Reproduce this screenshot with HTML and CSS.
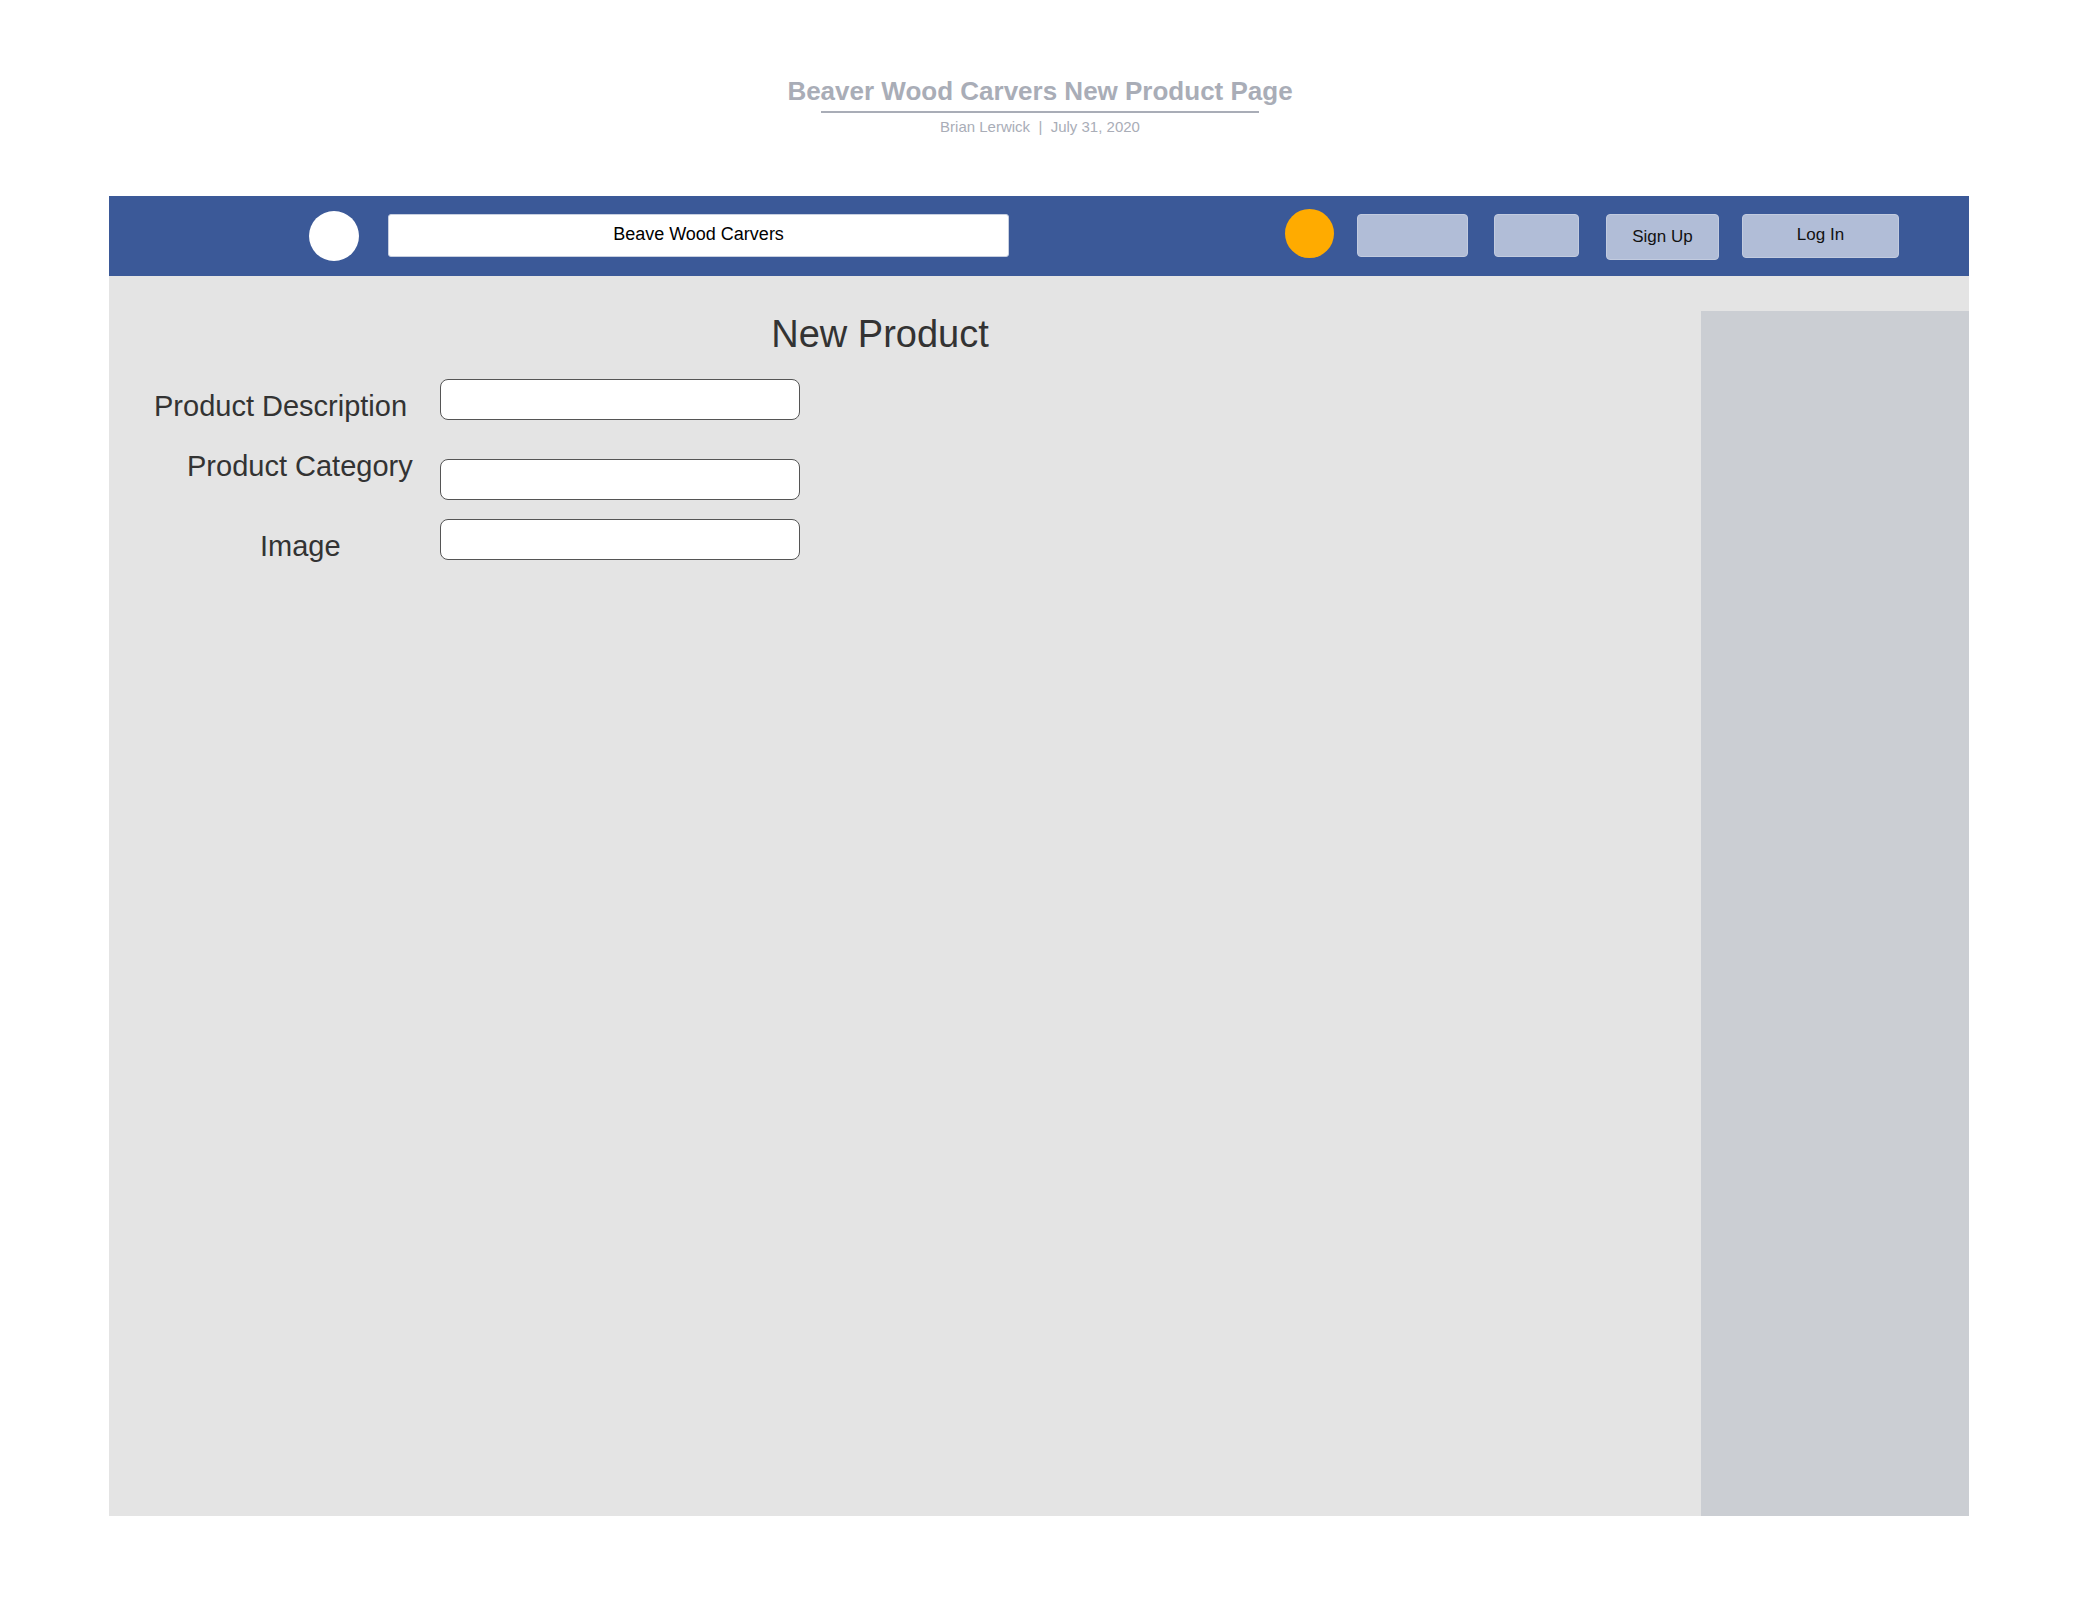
FILE: index.html
```html
<!DOCTYPE html>
<html lang="en">
<head>
<meta charset="utf-8">
<title>Beaver Wood Carvers New Product Page</title>
<link rel="stylesheet" href="styles.css">
</head>
<body>
<header class="doc-header">
  <h1 class="doc-title">Beaver Wood Carvers New Product Page</h1>
  <div class="doc-rule"></div>
  <p class="doc-meta">Brian Lerwick &nbsp;|&nbsp; July 31, 2020</p>
</header>

<div class="frame">
  <nav class="navbar">
    <span class="logo-dot"></span>
    <div class="search-box">Beave Wood Carvers</div>
    <span class="avatar-dot"></span>
    <span class="nav-btn nav-btn-a"></span>
    <span class="nav-btn nav-btn-b"></span>
    <span class="nav-btn nav-btn-signup">Sign Up</span>
    <span class="nav-btn nav-btn-login">Log In</span>
  </nav>

  <main class="workspace">
    <section class="content">
      <h2 class="page-heading">New Product</h2>
      <div class="form">
        <div class="form-row row-desc">
          <label class="form-label">Product Description</label>
          <div class="form-input"></div>
        </div>
        <div class="form-row row-cat">
          <label class="form-label">Product Category</label>
          <div class="form-input"></div>
        </div>
        <div class="form-row row-img">
          <label class="form-label">Image</label>
          <div class="form-input"></div>
        </div>
      </div>
    </section>
    <aside class="sidebar"></aside>
  </main>
</div>
</body>
</html>
```

FILE: styles.css
```css
* { box-sizing: border-box; }

html, body {
  margin: 0;
  padding: 0;
  background: #ffffff;
  font-family: "Liberation Sans", Arial, sans-serif;
}

/* ---------- document header ---------- */
.doc-header {
  padding-top: 76px;
  display: flex;
  flex-direction: column;
  align-items: center;
}

.doc-title {
  margin: 0;
  font-size: 26px;
  line-height: 30px;
  font-weight: 700;
  color: #a9adb7;
}

.doc-rule {
  margin-top: 5px;
  width: 438px;
  height: 2px;
  background: #a9adb7;
}

.doc-meta {
  margin: 5px 0 0;
  font-size: 15px;
  line-height: 17px;
  color: #a9adb7;
  white-space: pre;
}

/* ---------- frame ---------- */
.frame {
  margin: 61px 0 0 109px;
  width: 1860px;
}

.navbar {
  height: 80px;
  background: #3b5998;
  display: flex;
  align-items: flex-start;
  padding-left: 200px;
}

.logo-dot {
  margin-top: 15px;
  width: 50px;
  height: 50px;
  border-radius: 50%;
  background: #ffffff;
}

.search-box {
  margin: 18px 0 0 29px;
  width: 621px;
  height: 43px;
  padding-bottom: 2px;
  background: #ffffff;
  border: 1px solid #c7cfe0;
  border-radius: 3px;
  display: flex;
  align-items: center;
  justify-content: center;
  font-size: 18px;
  color: #000000;
}

.avatar-dot {
  margin: 13px 0 0 276px;
  width: 49px;
  height: 49px;
  border-radius: 50%;
  background: #ffab00;
}

.nav-btn {
  margin-top: 18px;
  height: 43px;
  background: #b1bdd7;
  border: 1px solid #c2cbdf;
  border-radius: 4px;
  display: flex;
  align-items: center;
  justify-content: center;
  font-size: 17px;
  color: #111111;
}

.nav-btn-a { margin-left: 23px; width: 111px; }
.nav-btn-b { margin-left: 26px; width: 85px; }
.nav-btn-signup { margin-left: 27px; width: 113px; height: 46px; }
.nav-btn-login { margin-left: 23px; width: 157px; height: 44px; padding-bottom: 2px; }

/* ---------- workspace ---------- */
.workspace {
  height: 1240px;
  background: #e4e4e4;
  display: grid;
  grid-template-columns: 1fr 268px;
}

.sidebar {
  margin-top: 35px;
  background: #cbced3;
}

.content {
  padding-top: 36px;
}

.page-heading {
  margin: 0;
  padding-right: 50px;
  text-align: center;
  font-size: 38px;
  line-height: 44px;
  font-weight: 400;
  color: #333333;
}

.form {
  display: flex;
  flex-direction: column;
}

.form-row {
  display: flex;
  align-items: flex-start;
  height: 41px;
}

.row-desc { margin-top: 23px; }
.row-cat { margin-top: 39px; }
.row-img { margin-top: 19px; }

.form-label {
  width: 331px;
  flex: none;
  font-size: 29px;
  line-height: 34px;
  color: #333333;
}

.row-desc .form-label { margin-top: 10px; padding-left: 45px; }
.row-cat .form-label { margin-top: -10px; padding-left: 78px; }
.row-img .form-label { margin-top: 10px; padding-left: 151px; }

.form-input {
  width: 360px;
  height: 41px;
  background: #ffffff;
  border: 1px solid #555555;
  border-radius: 8px;
}
```
